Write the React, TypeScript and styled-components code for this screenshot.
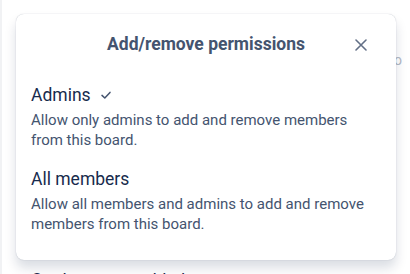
import React from "react";
import styled, { createGlobalStyle } from "styled-components";

const GlobalStyle = createGlobalStyle`
  html, body {
    margin: 0;
    padding: 0;
    background: #ffffff;
    font-family: Roboto, "Noto Sans", sans-serif;
  }
`;

type Option = {
  label: string;
  description: string;
  selected?: boolean;
};

const options: Option[] = [
  {
    label: "Admins",
    description: "Allow only admins to add and remove members from this board.",
    selected: true,
  },
  {
    label: "All members",
    description:
      "Allow all members and admins to add and remove members from this board.",
  },
];

const CheckIcon = () => (
  <svg width="12" height="12" viewBox="0 0 12 12" fill="none">
    <path
      d="M2 6.4 L4.8 9 L10 3.4"
      stroke="#44546f"
      strokeWidth="1.5"
      strokeLinecap="round"
      strokeLinejoin="round"
    />
  </svg>
);

const CloseIcon = () => (
  <svg width="12" height="12" viewBox="0 0 12 12" fill="none">
    <path
      d="M1 1 L11 11 M11 1 L1 11"
      stroke="#626f86"
      strokeWidth="1.6"
      strokeLinecap="round"
    />
  </svg>
);

const ChevronIcon = () => (
  <svg width="10" height="10" viewBox="0 0 10 10" fill="none">
    <path
      d="M2 3.5 L5 6.5 L8 3.5"
      stroke="#44546f"
      strokeWidth="1.5"
      strokeLinecap="round"
      strokeLinejoin="round"
    />
  </svg>
);

const App = () => {
  return (
    <>
      <GlobalStyle />
      <Page>
        <Backdrop>
          <SideText>o</SideText>
          <SettingRow>
            Card covers enabled
            <ChevronIcon />
          </SettingRow>
        </Backdrop>
        <Popover>
          <Header>
            <Title>Add/remove permissions</Title>
            <CloseButton aria-label="Close">
              <CloseIcon />
            </CloseButton>
          </Header>
          <OptionList>
            {options.map((opt) => (
              <OptionItem key={opt.label}>
                <OptionLabel>
                  {opt.label}
                  {opt.selected && <CheckIcon />}
                </OptionLabel>
                <OptionText>{opt.description}</OptionText>
              </OptionItem>
            ))}
          </OptionList>
        </Popover>
      </Page>
    </>
  );
};

const Page = styled.div`
  position: relative;
  width: 410px;
  height: 274px;
  overflow: hidden;
`;

const Backdrop = styled.div`
  height: 100%;
  border-left: 2px solid #f1f2f4;
  padding-left: 29px;
  display: flex;
  flex-direction: column;
  justify-content: flex-end;
  box-sizing: border-box;
`;

const SideText = styled.span`
  position: absolute;
  right: 8px;
  top: 52px;
  font-size: 14px;
  color: #b3b9c4;
`;

const SettingRow = styled.div`
  display: flex;
  align-items: center;
  gap: 8px;
  font-size: 17px;
  color: #172b4d;
  line-height: 20px;
  margin-bottom: -15px;
`;

const Popover = styled.div`
  position: absolute;
  left: 16px;
  top: 14px;
  width: 380px;
  height: 246px;
  box-sizing: border-box;
  background: #ffffff;
  border-radius: 8px;
  box-shadow: 0 8px 12px rgba(9, 30, 66, 0.15), 0 0 1px rgba(9, 30, 66, 0.31);
  padding: 0 15px;
`;

const Header = styled.div`
  position: relative;
  height: 60px;
  display: flex;
  align-items: center;
  justify-content: center;
`;

const Title = styled.h2`
  margin: 0;
  font-size: 17.5px;
  font-weight: 700;
  color: #44546f;
`;

const CloseButton = styled.button`
  position: absolute;
  right: 14px;
  top: 25px;
  width: 12px;
  height: 12px;
  padding: 0;
  border: none;
  background: none;
  display: flex;
`;

const OptionList = styled.div`
  padding-top: 9px;
  display: flex;
  flex-direction: column;
  gap: 17px;
`;

const OptionItem = styled.div`
  display: flex;
  flex-direction: column;
  gap: 3px;
`;

const OptionLabel = styled.div`
  display: flex;
  align-items: center;
  gap: 9px;
  font-size: 17.5px;
  line-height: 24px;
  color: #172b4d;
`;

const OptionText = styled.p`
  margin: 0;
  font-size: 15px;
  line-height: 20px;
  color: #44546f;
`;

export default App;
